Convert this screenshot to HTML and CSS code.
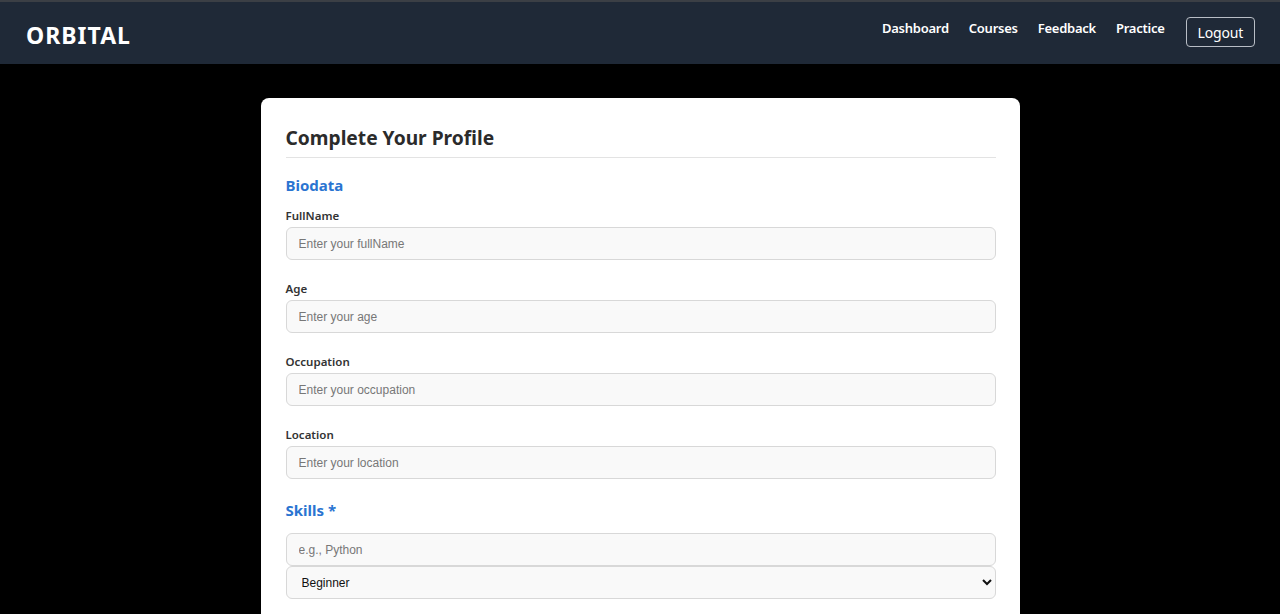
FILE: index.html
```html
<!DOCTYPE html>
<html lang="en">
<head>
<meta charset="utf-8">
<title>Orbital - Complete Your Profile</title>
<link rel="stylesheet" href="styles.css">
</head>
<body>
<header class="navbar">
  <div class="brand">ORBITAL</div>
  <nav class="nav-links">
    <a href="#" class="nav-link">Dashboard</a>
    <a href="#" class="nav-link">Courses</a>
    <a href="#" class="nav-link">Feedback</a>
    <a href="#" class="nav-link">Practice</a>
    <button class="logout-btn">Logout</button>
  </nav>
</header>
<main class="page">
  <section class="card">
    <h1 class="card-title">Complete Your Profile</h1>
    <h2 class="section-title">Biodata</h2>
    <div class="field">
      <label class="field-label">FullName</label>
      <input class="text-input" type="text" placeholder="Enter your fullName">
    </div>
    <div class="field">
      <label class="field-label">Age</label>
      <input class="text-input" type="text" placeholder="Enter your age">
    </div>
    <div class="field">
      <label class="field-label">Occupation</label>
      <input class="text-input" type="text" placeholder="Enter your occupation">
    </div>
    <div class="field">
      <label class="field-label">Location</label>
      <input class="text-input" type="text" placeholder="Enter your location">
    </div>
    <h2 class="section-title skills-title">Skills *</h2>
    <div class="skill-group">
      <input class="text-input" type="text" placeholder="e.g., Python">
      <select class="select-input">
        <option>Beginner</option>
        <option>Intermediate</option>
        <option>Advanced</option>
      </select>
    </div>
  </section>
</main>
</body>
</html>
```
FILE: styles.css
```css
* { box-sizing: border-box; }
html, body { margin: 0; padding: 0; }
body {
  background: #000;
  font-family: "Noto Sans", "Open Sans", sans-serif;
  color: #2d2d2d;
}
.navbar {
  height: 64px;
  background: #1f2937;
  border-top: 2px solid #3b3f45;
  display: flex;
  align-items: center;
  justify-content: space-between;
  padding: 0 25px 0 26px;
}
.brand {
  color: #fff;
  font-size: 23px;
  font-weight: 700;
  letter-spacing: 1px;
  margin-top: 4px;
}
.nav-links {
  display: flex;
  align-items: center;
  gap: 20px;
}
.nav-link {
  color: #fff;
  text-decoration: none;
  font-size: 13px;
  font-weight: 600;
  letter-spacing: -0.25px;
  margin-top: -10px;
}
.logout-btn {
  margin-left: 1px;
  height: 30px;
  padding: 0 11px;
  background: transparent;
  color: #fff;
  border: 1px solid #b9bec6;
  border-radius: 4px;
  font-family: "Noto Sans", sans-serif;
  font-size: 14px;
  letter-spacing: -0.2px;
  cursor: pointer;
  margin-top: -2px;
}
.page {
  display: flex;
  justify-content: center;
  padding-top: 34px;
}
.card {
  width: 759px;
  background: #fff;
  border-radius: 8px;
  padding: 25px 24px 40px 25px;
}
.card-title {
  margin: 0;
  font-size: 19.2px;
  font-weight: 700;
  color: #2b2b2b;
  padding-bottom: 5px;
  border-bottom: 1px solid #e3e3e3;
  line-height: 29px;
}
.section-title {
  margin: 17px 0 13px;
  font-size: 15px;
  font-weight: 700;
  color: #2a74d1;
  line-height: 20px;
}
.skills-title {
  margin: 0 0 13px;
}
.field {
  display: flex;
  flex-direction: column;
  margin-bottom: 21px;
}
.field-label {
  font-size: 11.5px;
  font-weight: 600;
  color: #333;
  line-height: 16px;
  margin-bottom: 3px;
}
.text-input, .select-input {
  width: 100%;
  height: 33px;
  border: 1px solid #d8d8d8;
  border-radius: 6px;
  background: #f9f9f9;
  font-family: "Liberation Sans", Arial, sans-serif;
  font-size: 12px;
  padding: 0 12px;
  color: #222;
}
.text-input::placeholder { color: #777; }
.skill-group {
  display: flex;
  flex-direction: column;
}
.select-input {
  padding: 0 8px 0 11px;
  color: #111;
}
```
